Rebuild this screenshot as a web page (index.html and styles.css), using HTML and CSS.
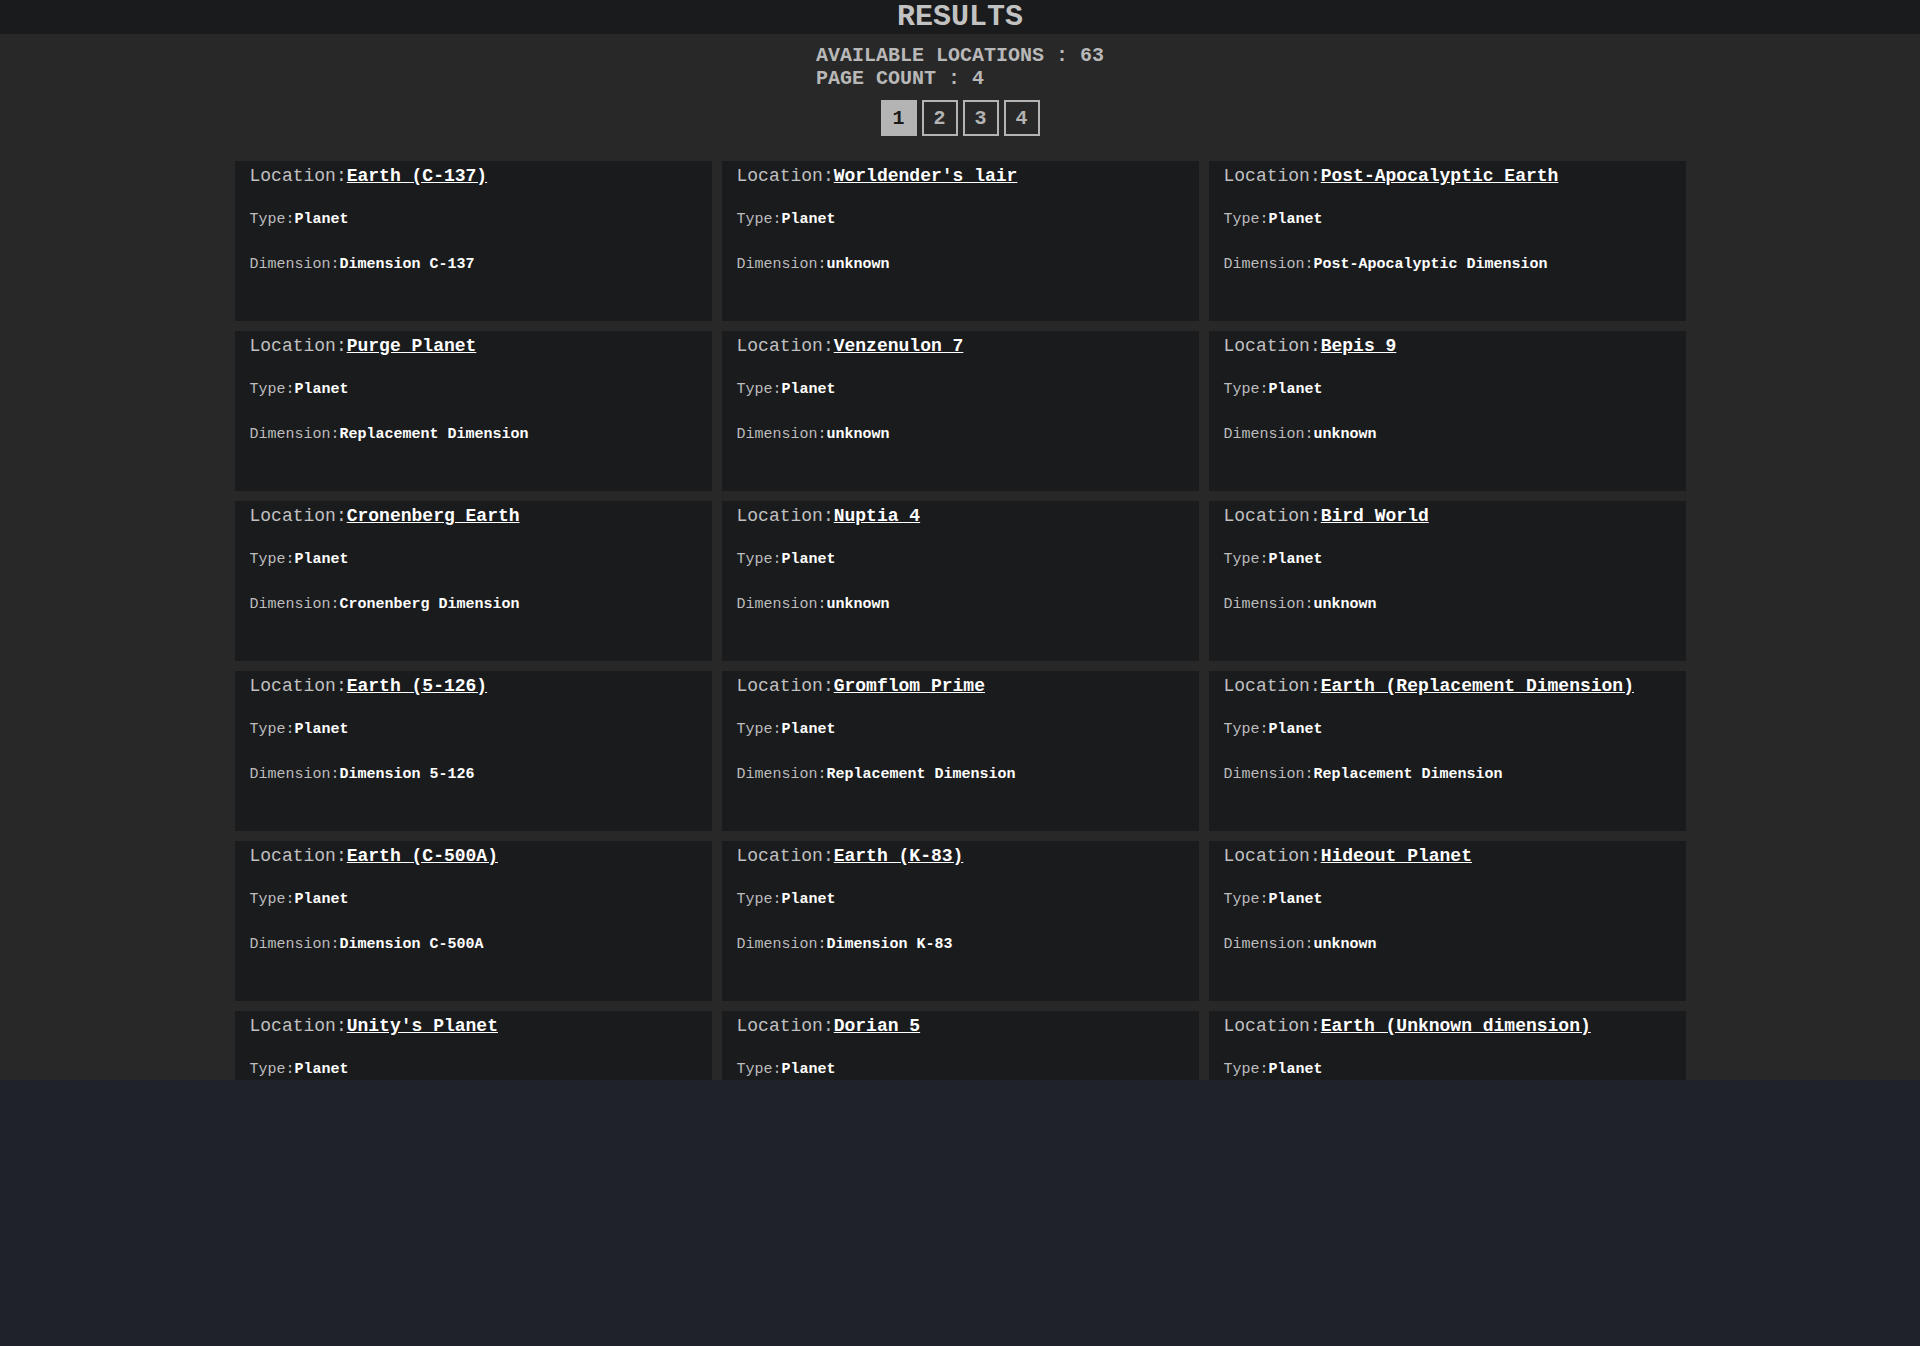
FILE: index.html
```html
<!DOCTYPE html>
<html lang="en">
<head>
<meta charset="utf-8">
<title>Results</title>
<link rel="stylesheet" href="styles.css">
</head>
<body>
<div class="app">
  <header class="header"><h1 class="title">RESULTS</h1></header>
  <div class="summary">
    <div>AVAILABLE LOCATIONS : 63</div>
    <div>PAGE COUNT : 4</div>
  </div>
  <nav class="pager">
    <button class="page active">1</button>
    <button class="page">2</button>
    <button class="page">3</button>
    <button class="page">4</button>
  </nav>
  <main class="grid">
    <div class="card"><div class="loc">Location:<a href="#">Earth (C-137)</a></div><div class="field type">Type:<b>Planet</b></div><div class="field dim">Dimension:<b>Dimension C-137</b></div></div>
    <div class="card"><div class="loc">Location:<a href="#">Worldender's lair</a></div><div class="field type">Type:<b>Planet</b></div><div class="field dim">Dimension:<b>unknown</b></div></div>
    <div class="card"><div class="loc">Location:<a href="#">Post-Apocalyptic Earth</a></div><div class="field type">Type:<b>Planet</b></div><div class="field dim">Dimension:<b>Post-Apocalyptic Dimension</b></div></div>
    <div class="card"><div class="loc">Location:<a href="#">Purge Planet</a></div><div class="field type">Type:<b>Planet</b></div><div class="field dim">Dimension:<b>Replacement Dimension</b></div></div>
    <div class="card"><div class="loc">Location:<a href="#">Venzenulon 7</a></div><div class="field type">Type:<b>Planet</b></div><div class="field dim">Dimension:<b>unknown</b></div></div>
    <div class="card"><div class="loc">Location:<a href="#">Bepis 9</a></div><div class="field type">Type:<b>Planet</b></div><div class="field dim">Dimension:<b>unknown</b></div></div>
    <div class="card"><div class="loc">Location:<a href="#">Cronenberg Earth</a></div><div class="field type">Type:<b>Planet</b></div><div class="field dim">Dimension:<b>Cronenberg Dimension</b></div></div>
    <div class="card"><div class="loc">Location:<a href="#">Nuptia 4</a></div><div class="field type">Type:<b>Planet</b></div><div class="field dim">Dimension:<b>unknown</b></div></div>
    <div class="card"><div class="loc">Location:<a href="#">Bird World</a></div><div class="field type">Type:<b>Planet</b></div><div class="field dim">Dimension:<b>unknown</b></div></div>
    <div class="card"><div class="loc">Location:<a href="#">Earth (5-126)</a></div><div class="field type">Type:<b>Planet</b></div><div class="field dim">Dimension:<b>Dimension 5-126</b></div></div>
    <div class="card"><div class="loc">Location:<a href="#">Gromflom Prime</a></div><div class="field type">Type:<b>Planet</b></div><div class="field dim">Dimension:<b>Replacement Dimension</b></div></div>
    <div class="card"><div class="loc">Location:<a href="#">Earth (Replacement Dimension)</a></div><div class="field type">Type:<b>Planet</b></div><div class="field dim">Dimension:<b>Replacement Dimension</b></div></div>
    <div class="card"><div class="loc">Location:<a href="#">Earth (C-500A)</a></div><div class="field type">Type:<b>Planet</b></div><div class="field dim">Dimension:<b>Dimension C-500A</b></div></div>
    <div class="card"><div class="loc">Location:<a href="#">Earth (K-83)</a></div><div class="field type">Type:<b>Planet</b></div><div class="field dim">Dimension:<b>Dimension K-83</b></div></div>
    <div class="card"><div class="loc">Location:<a href="#">Hideout Planet</a></div><div class="field type">Type:<b>Planet</b></div><div class="field dim">Dimension:<b>unknown</b></div></div>
    <div class="card"><div class="loc">Location:<a href="#">Unity's Planet</a></div><div class="field type">Type:<b>Planet</b></div><div class="field dim">Dimension:<b>Replacement Dimension</b></div></div>
    <div class="card"><div class="loc">Location:<a href="#">Dorian 5</a></div><div class="field type">Type:<b>Planet</b></div><div class="field dim">Dimension:<b>Replacement Dimension</b></div></div>
    <div class="card"><div class="loc">Location:<a href="#">Earth (Unknown dimension)</a></div><div class="field type">Type:<b>Planet</b></div><div class="field dim">Dimension:<b>Unknown dimension</b></div></div>
  </main>
</div>
</body>
</html>
```
FILE: styles.css
```css
html {
  background: #1f222a;
}
body {
  margin: 0;
  font-family: "Liberation Mono", "Courier New", monospace;
}
.app {
  height: 1080px;
  overflow: hidden;
  background: #282828;
}
.header {
  height: 34px;
  background: #1a1b1d;
}
.title {
  margin: 0;
  font-size: 30px;
  font-weight: bold;
  line-height: 34px;
  text-align: center;
  color: #c2c2c2;
}
.summary {
  width: fit-content;
  margin: 10px auto 0;
  font-size: 20px;
  font-weight: bold;
  color: #b8b8b8;
}
.pager {
  display: flex;
  justify-content: center;
  gap: 5px;
  margin-top: 10px;
}
.page {
  width: 36px;
  height: 36px;
  box-sizing: border-box;
  padding: 0;
  border: 2px solid #b4b4b4;
  background: transparent;
  color: #b4b4b4;
  font-family: "Liberation Mono", monospace;
  font-size: 20px;
  font-weight: bold;
}
.page.active {
  background: #b4b4b4;
  color: #1a1a1a;
}
.grid {
  width: 1451px;
  margin: 25px auto 0;
  display: grid;
  grid-template-columns: repeat(3, 477px);
  gap: 10px;
}
.card {
  height: 160px;
  box-sizing: border-box;
  padding: 5px 15px 0;
  background: #1a1b1d;
}
.loc {
  font-size: 18px;
  line-height: 20px;
  color: #c0c0c0;
}
.loc a {
  color: #ffffff;
  font-weight: bold;
  text-decoration: underline;
}
.field {
  font-size: 15px;
  line-height: 20px;
  color: #bdbdbd;
}
.field b {
  color: #ffffff;
}
.type {
  margin-top: 24px;
}
.dim {
  margin-top: 25px;
}
```
